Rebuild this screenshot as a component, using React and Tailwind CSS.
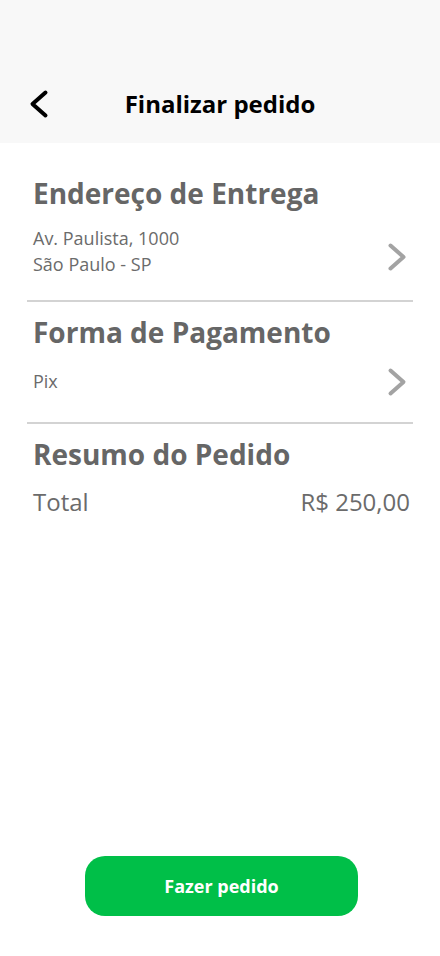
const Chevron = ({ dir = "right", className = "" }) => (
  <svg width="20" height="30" viewBox="0 0 20 30" fill="none" className={className}>
    <path
      d={dir === "right" ? "M3.5 3.5 L16.5 15 L3.5 26.5" : "M16.5 3.5 L3.5 15 L16.5 26.5"}
      stroke="currentColor"
      strokeWidth={4}
      strokeLinecap="round"
      strokeLinejoin="round"
    />
  </svg>
);

const Section = ({ title, className = "", children }) => (
  <section className={`border-b-2 border-[#d3d3d3] px-[6px] ${className}`}>
    <h2 className="text-[28px] leading-[36px] font-bold text-[#666666]">{title}</h2>
    <div className="mt-[14px]">{children}</div>
  </section>
);

export default function App() {
  return (
    <div className="min-h-[956px] flex flex-col bg-white font-['Open_Sans',sans-serif]">
      <header className="bg-[#f8f8f8] h-[143px] pt-[64px]">
        <div className="h-[79px] grid grid-cols-[1fr_auto_1fr] items-center">
          <button className="pl-[29px] text-black">
            <Chevron dir="left" />
          </button>
          <h1 className="text-[24px] leading-[32px] font-bold text-black">Finalizar pedido</h1>
          <div />
        </div>
      </header>

      <main className="flex-1 px-[27px]">
        <Section title="Endereço de Entrega" className="pt-[32px] pb-[23px]">
          <div className="flex justify-between items-center">
            <div className="text-[18px] leading-[26px] text-[#6b6b6b]">
              <p>Av. Paulista, 1000</p>
              <p>São Paulo - SP</p>
            </div>
            <Chevron className="text-[#a3a3a3] mt-[12px]" />
          </div>
        </Section>

        <Section title="Forma de Pagamento" className="pt-[12px] pb-[25px]">
          <div className="flex justify-between items-center">
            <p className="text-[18px] leading-[26px] text-[#6b6b6b]">Pix</p>
            <Chevron className="text-[#a3a3a3] mt-[3px]" />
          </div>
        </Section>

        <section className="pt-[12px] pr-[3px] pl-[6px]">
          <h2 className="text-[28px] leading-[36px] font-bold text-[#666666]">Resumo do Pedido</h2>
          <div className="mt-[14px] flex justify-between text-[24px] leading-[32px] text-[#6b6b6b]">
            <span>Total</span>
            <span>R$ 250,00</span>
          </div>
        </section>
      </main>

      <div className="pb-[40px] pl-[85px]">
        <button className="w-[273px] h-[60px] rounded-[20px] bg-[#00bf48] text-white text-[18px] font-bold">
          Fazer pedido
        </button>
      </div>
    </div>
  );
}
